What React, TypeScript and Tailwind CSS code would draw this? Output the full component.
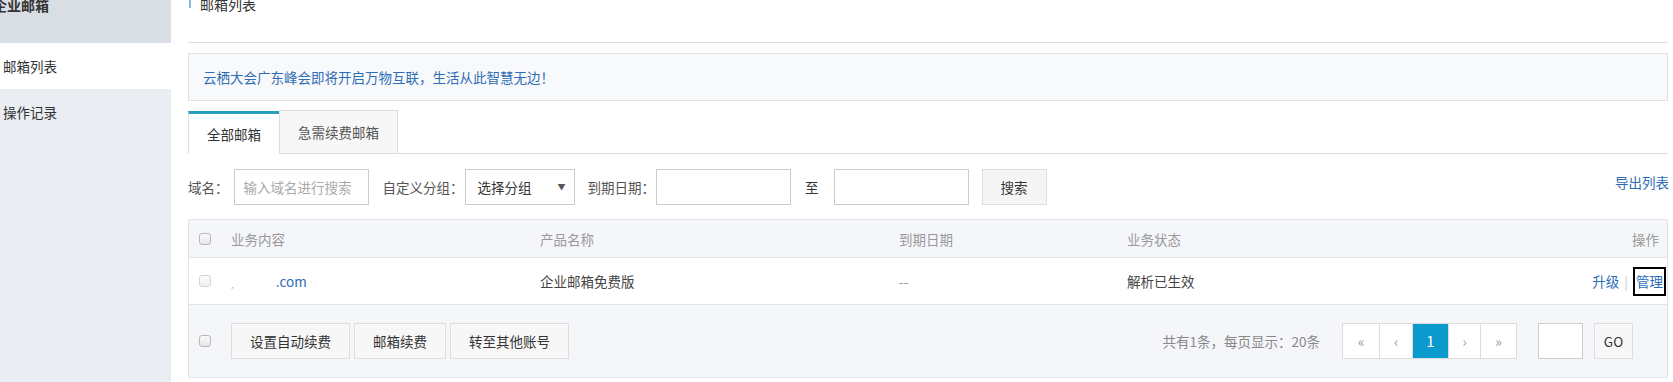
import React from 'react'

const font = { fontFamily: '"Noto Sans CJK SC", "Noto Sans", sans-serif' }

function Checkbox() {
  return (
    <span className="inline-block w-[12px] h-[12px] rounded-[3px] border border-[#b9b9b9] bg-gradient-to-b from-[#fafafa] to-[#e6e6e6]" />
  )
}

export default function App() {
  const pages = [
    { label: '«', w: 'w-[36px]', active: false },
    { label: '‹', w: 'w-[33px]', active: false },
    { label: '1', w: 'w-[36px]', active: true },
    { label: '›', w: 'w-[32px]', active: false },
    { label: '»', w: 'w-[36px]', active: false },
  ]

  return (
    <div
      className="flex w-[1673px] h-[382px] overflow-hidden bg-white text-[13.5px] leading-[20px] text-[#333]"
      style={font}
    >
      {/* Sidebar */}
      <div className="w-[171px] shrink-0 flex flex-col bg-[#eaedf1]">
        <div className="h-[43px] bg-[#d9dee4]">
          <div className="-mt-[5px] -ml-[7px] text-[14px] font-bold text-[#333]">企业邮箱</div>
        </div>
        <div className="h-[46px] bg-white flex items-center pl-[3px] text-[#333]">邮箱列表</div>
        <div className="h-[46px] flex items-center pl-[3px] text-[#333]">操作记录</div>
      </div>

      {/* Main */}
      <div className="flex-1 pl-[17px] pr-[5px] flex flex-col">
        {/* Title */}
        <div className="h-[43px] shrink-0 border-b border-[#dddddd]">
          <div className="flex items-start -mt-[6px]">
            <span className="w-[2px] h-[14px] bg-[#8bb8dc] ml-[1px] mr-[9px]" />
            <span className="text-[14px] text-[#333]">邮箱列表</span>
          </div>
        </div>

        {/* Notice */}
        <div className="mt-[10px] h-[48px] shrink-0 border border-[#dfe2e6] bg-[#f8f9fb] flex items-center pl-[14px] text-[#2e6db5]">
          云栖大会广东峰会即将开启万物互联，生活从此智慧无边！
        </div>

        {/* Tabs */}
        <div className="mt-[10px] h-[43px] shrink-0 flex items-end border-b border-[#dddddd]">
          <div className="w-[91px] h-[43px] -mb-px bg-white border-t-[3px] border-t-[#2aa0b8] border-l border-l-[#dddddd] flex items-center justify-center text-[#333]">
            全部邮箱
          </div>
          <div className="w-[119px] h-[43px] bg-[#f7f7f7] border border-b-0 border-[#dddddd] flex items-center justify-center text-[#555]">
            急需续费邮箱
          </div>
        </div>

        {/* Filters */}
        <div className="h-[65px] shrink-0 flex items-center">
          <span className="text-[#555]">域名：</span>
          <div className="ml-[5px] w-[135px] h-[36px] border border-[#cccccc] flex items-center pl-[9px] text-[#aaa]">
            输入域名进行搜索
          </div>
          <span className="ml-[14px] text-[#555]">自定义分组：</span>
          <div className="ml-[1px] w-[110px] h-[36px] border border-[#cccccc] flex items-center pl-[12px] pr-[8px] text-[#333]">
            <span className="flex-1">选择分组</span>
            <span className="text-[8px] text-[#555]">▼</span>
          </div>
          <span className="ml-[13px] text-[#555]">到期日期：</span>
          <div className="ml-[1px] w-[135px] h-[36px] border border-[#cccccc]" />
          <span className="ml-[14px] text-[#333]">至</span>
          <div className="ml-[15px] w-[135px] h-[36px] border border-[#cccccc]" />
          <div className="ml-[13px] w-[65px] h-[36px] border border-[#dddddd] bg-[#f5f5f5] flex items-center justify-center text-[#333]">
            搜索
          </div>
          <span className="ml-auto -mt-[10px] -mr-[1px] text-[#2e6db5]">导出列表</span>
        </div>

        {/* Table */}
        <div className="border border-[#e1e4e8]">
          <div className="h-[38px] bg-[#f5f6fa] border-b border-[#e1e4e8] grid grid-cols-[42px_309px_359px_228px_1fr] items-center text-[#999]">
            <div className="pl-[10px] flex"><Checkbox /></div>
            <div>业务内容</div>
            <div>产品名称</div>
            <div>到期日期</div>
            <div className="flex">
              <span>业务状态</span>
              <span className="ml-auto pr-[8px]">操作</span>
            </div>
          </div>
          <div className="h-[47px] bg-white border-b border-[#e1e4e8] grid grid-cols-[42px_309px_359px_228px_1fr] items-center">
            <div className="pl-[10px] flex opacity-60"><Checkbox /></div>
            <div className="text-[#2e6db5] flex items-end">
              <span className="text-[10px] leading-[14px] opacity-50 mb-[1px]">ˏ</span>
              <span className="ml-[42px]">.com</span>
            </div>
            <div className="text-[#444]">企业邮箱免费版</div>
            <div className="text-[#999]">--</div>
            <div className="flex items-center">
              <span className="text-[#444]">解析已生效</span>
              <span className="ml-auto text-[#2e6db5]">升级</span>
              <span className="mx-[5px] text-[#ccc]">|</span>
              <span className="border-2 border-black px-[1px] h-[29px] flex items-center text-[#2e6db5] mr-[1px]">管理</span>
            </div>
          </div>
          <div className="h-[72px] bg-[#f5f6fa] flex items-center pl-[10px] pr-[34px]">
            <Checkbox />
            <div className="ml-[20px] flex gap-[4px]">
              <div className="w-[119px] h-[36px] border border-[#dddddd] bg-[#f7f7f7] flex items-center justify-center">设置自动续费</div>
              <div className="w-[92px] h-[36px] border border-[#dddddd] bg-[#f7f7f7] flex items-center justify-center">邮箱续费</div>
              <div className="w-[119px] h-[36px] border border-[#dddddd] bg-[#f7f7f7] flex items-center justify-center">转至其他账号</div>
            </div>
            <span className="ml-auto text-[#888]">共有1条，每页显示：20条</span>
            <div className="ml-[22px] flex h-[36px] border border-[#dddddd] bg-white">
              {pages.map((p, i) => (
                <div
                  key={i}
                  className={`${p.w} h-full flex items-center justify-center ${i > 0 ? 'border-l border-[#dddddd]' : ''} ${
                    p.active ? 'bg-[#0a9acb] text-white text-[15px]' : 'text-[#999] text-[14px]'
                  }`}
                >
                  {p.label}
                </div>
              ))}
            </div>
            <div className="ml-[21px] w-[45px] h-[36px] border border-[#cccccc] bg-white" />
            <div className="ml-[11px] w-[39px] h-[36px] border border-[#dddddd] bg-[#f7f7f7] flex items-center justify-center text-[#333]">
              GO
            </div>
          </div>
        </div>
      </div>
    </div>
  )
}
